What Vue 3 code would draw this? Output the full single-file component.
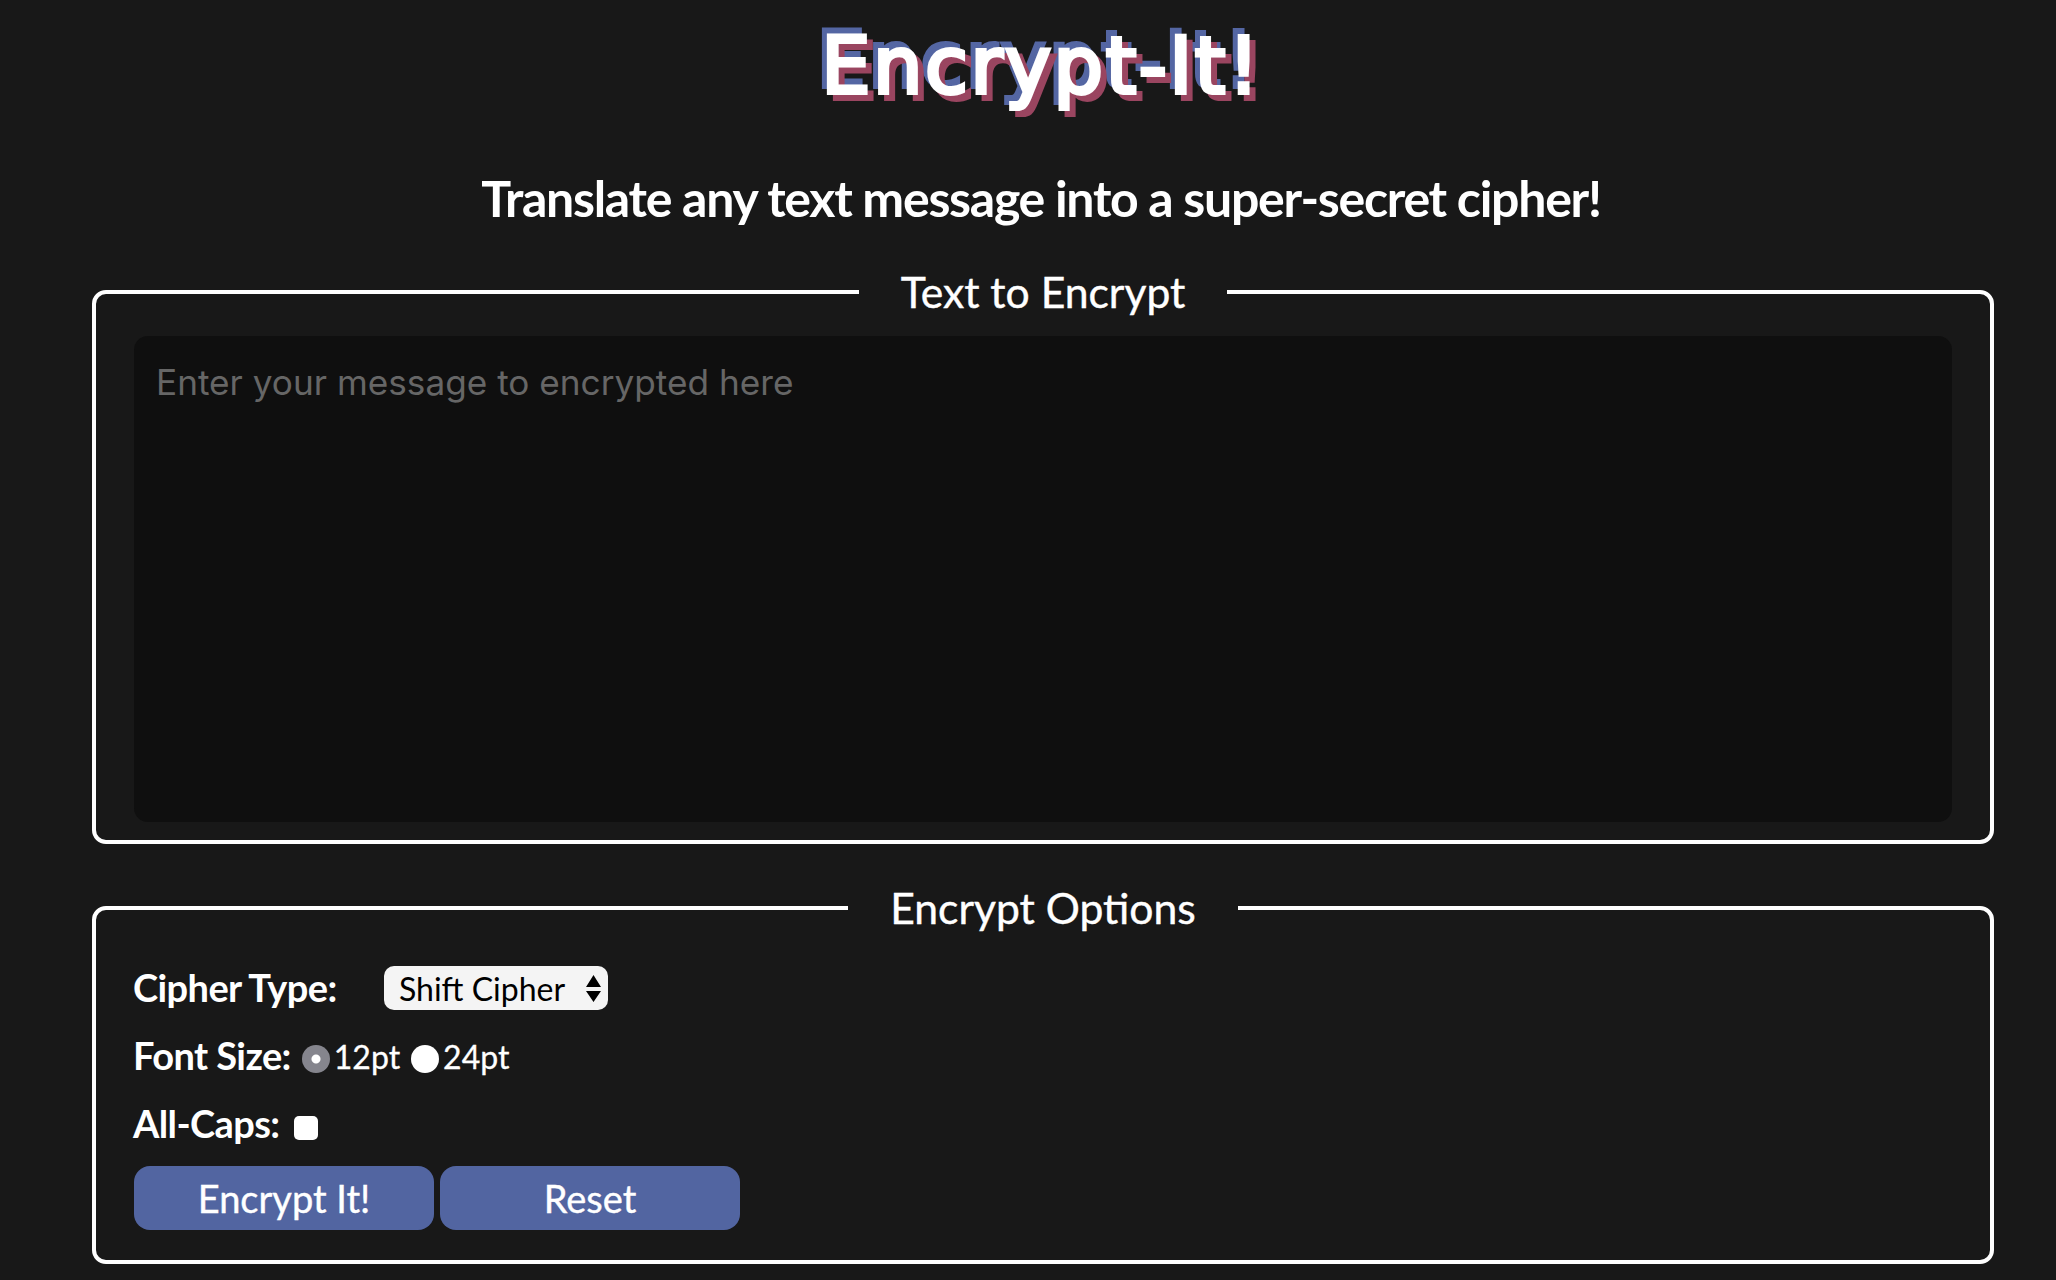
<script setup>
import { ref } from 'vue'
const message = ref('')
const cipher = ref('shift')
const size = ref('12')
const caps = ref(false)
</script>

<template>
  <main class="page">
    <h1 class="title"><span class="logo" data-text="Encrypt-It!">Encrypt-It!</span></h1>
    <h2 class="subtitle">Translate any text message into a super-secret cipher!</h2>

    <fieldset class="panel text-panel">
      <legend>Text to Encrypt</legend>
      <textarea v-model="message" class="message" placeholder="Enter your message to encrypted here"></textarea>
    </fieldset>

    <fieldset class="panel options-panel">
      <legend>Encrypt Options</legend>
      <div class="row cipher-row">
        <label class="label" for="cipher">Cipher Type:</label>
        <span class="select-wrap">
          <select id="cipher" v-model="cipher">
            <option value="shift">Shift Cipher</option>
          </select>
          <svg class="arrows" viewBox="0 0 15 27" width="15" height="27" aria-hidden="true">
            <path d="M7.5 0 L15 12 H0 Z M0 16 H15 L7.5 27 Z" fill="#000" />
          </svg>
        </span>
      </div>
      <div class="row">
        <span class="label">Font Size:</span>
        <label class="choice"><input v-model="size" type="radio" value="12" />12pt</label>
        <label class="choice"><input v-model="size" type="radio" value="24" />24pt</label>
      </div>
      <div class="row">
        <label class="label" for="caps">All-Caps:</label>
        <input id="caps" v-model="caps" class="check" type="checkbox" />
      </div>
      <div class="buttons">
        <button type="button">Encrypt It!</button>
        <button type="button">Reset</button>
      </div>
    </fieldset>
  </main>
</template>

<style>
html, body { margin: 0; background: #181818; }
</style>

<style scoped>
.page {
  box-sizing: border-box;
  height: 1280px;
  overflow: hidden;
  padding: 0 62px 0 92px;
  background: #181818;
  color: #fff;
  font-family: Lato, "Liberation Sans", sans-serif;
}
.title {
  box-sizing: border-box;
  height: 130px;
  margin: 0;
  padding-top: 21px;
  text-align: center;
  font-family: "DejaVu Sans", sans-serif;
  font-size: 78px;
  line-height: 90px;
  font-weight: 400;
  letter-spacing: 2.5px;
}
.logo {
  position: relative;
  display: inline-block;
  isolation: isolate;
  margin-left: -3px;
  -webkit-text-stroke: 4px #fff;
}
.logo::before,
.logo::after {
  content: attr(data-text);
  position: absolute;
  white-space: nowrap;
}
.logo::before {
  left: -5px;
  top: -6px;
  z-index: -2;
  color: #5466a3;
  -webkit-text-stroke: 4px #5466a3;
}
.logo::after {
  left: 6px;
  top: 6px;
  z-index: -1;
  color: #9a4560;
  -webkit-text-stroke: 4px #9a4560;
}
.subtitle {
  margin: 38px 0 0;
  padding-right: 4px;
  text-align: center;
  font-size: 50px;
  line-height: 60px;
  font-weight: 700;
  letter-spacing: -1.27px;
}
.panel {
  box-sizing: border-box;
  width: 1902px;
  margin: 0;
  padding: 0 38px;
  border: 4px solid #fff;
  border-radius: 14px;
  min-inline-size: 0;
}
.panel legend {
  margin: 0 auto;
  padding: 0 42px;
  font-size: 42.67px;
  line-height: 48px;
  -webkit-text-stroke: 0.4px #fff;
}
.text-panel { margin-top: 40px; height: 576px; }
.options-panel { margin-top: 40px; height: 380px; }
.message {
  display: block;
  box-sizing: border-box;
  width: 100%;
  height: 486px;
  margin-top: 20px;
  padding: 24px 22px;
  border: 0;
  border-radius: 14px;
  outline: 0;
  resize: none;
  background: #0f0f0f;
  color: #fff;
  font-family: Inter, sans-serif;
  font-size: 35.2px;
  line-height: 44px;
}
.message::placeholder { color: #666; opacity: 1; }
.row { display: flex; align-items: center; height: 68px; }
.cipher-row { margin-top: 22px; }
.label {
  margin: -2px 0 0 -1px;
  font-size: 38px;
  font-weight: 700;
  letter-spacing: -0.6px;
}
.cipher-row .label { width: 251px; }
.select-wrap { position: relative; display: block; }
.select-wrap select {
  display: block;
  appearance: none;
  box-sizing: border-box;
  width: 224px;
  height: 44px;
  padding: 0 0 0 15px;
  border: 0;
  border-radius: 10px;
  background: #f4f4f4;
  color: #000;
  font-family: Lato, sans-serif;
  font-size: 32px;
}
.arrows { position: absolute; right: 7px; top: 9px; pointer-events: none; }
.choice { display: flex; align-items: center; font-size: 32px; -webkit-text-stroke: 0.3px #fff; }
.choice input {
  appearance: none;
  width: 28px;
  height: 28px;
  margin: 6px 4px 0 11px;
  border-radius: 50%;
  background: #fff;
}
.choice input:checked { background: radial-gradient(circle, #fff 0 4px, #85858d 5px); }
.check {
  appearance: none;
  width: 24px;
  height: 24px;
  margin: 8px 0 0 14px;
  border-radius: 5px;
  background: #fff;
}
.buttons { display: flex; gap: 6px; margin-top: 8px; }
.buttons button {
  width: 300px;
  height: 64px;
  border: 0;
  border-radius: 16px;
  background: #5265a1;
  color: #fff;
  font-family: Lato, sans-serif;
  font-size: 38px;
  -webkit-text-stroke: 0.4px #fff;
}
</style>
